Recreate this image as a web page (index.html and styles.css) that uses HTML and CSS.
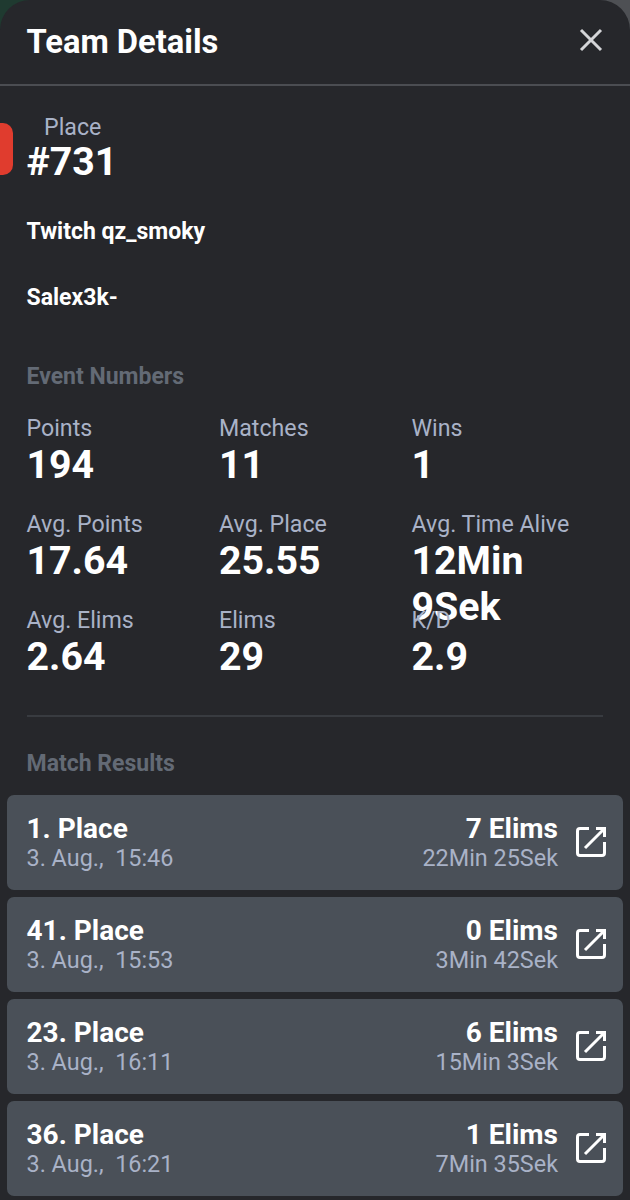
FILE: index.html
```html
<!DOCTYPE html>
<html lang="en">
<head>
    <meta charset="UTF-8">
    <meta name="viewport" content="width=device-width, initial-scale=1.0">
    <title>Team Details</title>
    <link rel="stylesheet" href="styles.css">
</head>
<body>

<div class="panel">
    <div class="header">
        <h1>Team Details</h1>
        <svg class="close" width="26" height="26" viewBox="0 0 26 26" aria-label="Close">
            <path d="M3 3 L23 23 M23 3 L3 23" fill="none" stroke="#d4d5d8" stroke-width="3"/>
        </svg>
    </div>

    <div class="place">
        <div class="place-marker"></div>
        <div class="place-label">Place</div>
        <div class="place-value">#731</div>
    </div>

    <div class="player">Twitch qz_smoky</div>
    <div class="player">Salex3k-</div>

    <h2 class="section-title numbers-title">Event Numbers</h2>
    <div class="stats">
        <div class="stat"><div class="stat-label">Points</div><div class="stat-value">194</div></div>
        <div class="stat"><div class="stat-label">Matches</div><div class="stat-value">11</div></div>
        <div class="stat"><div class="stat-label">Wins</div><div class="stat-value">1</div></div>
        <div class="stat"><div class="stat-label">Avg. Points</div><div class="stat-value">17.64</div></div>
        <div class="stat"><div class="stat-label">Avg. Place</div><div class="stat-value">25.55</div></div>
        <div class="stat"><div class="stat-label">Avg. Time Alive</div><div class="stat-value">12Min 9Sek</div></div>
        <div class="stat"><div class="stat-label">Avg. Elims</div><div class="stat-value">2.64</div></div>
        <div class="stat"><div class="stat-label">Elims</div><div class="stat-value">29</div></div>
        <div class="stat"><div class="stat-label">K/D</div><div class="stat-value">2.9</div></div>
    </div>

    <hr class="divider">

    <h2 class="section-title">Match Results</h2>
    <div class="matches">
        <div class="match">
            <div class="match-left"><div class="match-main">1. Place</div><div class="match-sub">3. Aug., &nbsp;15:46</div></div>
            <div class="match-right"><div class="match-main">7 Elims</div><div class="match-sub">22Min 25Sek</div></div>
            <svg class="open" width="32" height="32" viewBox="0 0 32 32"><path d="M14 2.5 H5 Q2.5 2.5 2.5 5 V27 Q2.5 29.5 5 29.5 H27 Q29.5 29.5 29.5 27 V16 M10 22 L29 3 M21 2.5 H29.5 V11" fill="none" stroke="#fff" stroke-width="3"/></svg>
        </div>
        <div class="match">
            <div class="match-left"><div class="match-main">41. Place</div><div class="match-sub">3. Aug., &nbsp;15:53</div></div>
            <div class="match-right"><div class="match-main">0 Elims</div><div class="match-sub">3Min 42Sek</div></div>
            <svg class="open" width="32" height="32" viewBox="0 0 32 32"><path d="M14 2.5 H5 Q2.5 2.5 2.5 5 V27 Q2.5 29.5 5 29.5 H27 Q29.5 29.5 29.5 27 V16 M10 22 L29 3 M21 2.5 H29.5 V11" fill="none" stroke="#fff" stroke-width="3"/></svg>
        </div>
        <div class="match">
            <div class="match-left"><div class="match-main">23. Place</div><div class="match-sub">3. Aug., &nbsp;16:11</div></div>
            <div class="match-right"><div class="match-main">6 Elims</div><div class="match-sub">15Min 3Sek</div></div>
            <svg class="open" width="32" height="32" viewBox="0 0 32 32"><path d="M14 2.5 H5 Q2.5 2.5 2.5 5 V27 Q2.5 29.5 5 29.5 H27 Q29.5 29.5 29.5 27 V16 M10 22 L29 3 M21 2.5 H29.5 V11" fill="none" stroke="#fff" stroke-width="3"/></svg>
        </div>
        <div class="match">
            <div class="match-left"><div class="match-main">36. Place</div><div class="match-sub">3. Aug., &nbsp;16:21</div></div>
            <div class="match-right"><div class="match-main">1 Elims</div><div class="match-sub">7Min 35Sek</div></div>
            <svg class="open" width="32" height="32" viewBox="0 0 32 32"><path d="M14 2.5 H5 Q2.5 2.5 2.5 5 V27 Q2.5 29.5 5 29.5 H27 Q29.5 29.5 29.5 27 V16 M10 22 L29 3 M21 2.5 H29.5 V11" fill="none" stroke="#fff" stroke-width="3"/></svg>
        </div>
    </div>
</div>

</body>
</html>
```

FILE: styles.css
```css
html, body {
    margin: 0;
    padding: 0;
    height: 1200px;
    overflow: hidden;
    background: linear-gradient(90deg, #1f3a30 0%, #1f3a30 50%, #4e5054 50%, #4e5054 100%);
}
body {
    font-family: 'Roboto', sans-serif;
    color: #fff;
}
.panel {
    height: 1200px;
    background-color: #26272b;
    border-radius: 30px 30px 0 0;
    overflow: hidden;
}
.header {
    height: 84px;
    padding: 0 27px;
    display: flex;
    justify-content: space-between;
    align-items: center;
    border-bottom: 2px solid #4b4d52;
}
.header h1 {
    margin: 0 0 0 -0.5px;
    font-size: 32.7px;
    font-weight: 700;
}
.close {
    margin: -4px -1px 0 0;
}
.place {
    position: relative;
    padding: 28px 27px 0;
    height: 65px;
}
.place-marker {
    position: absolute;
    left: -12px;
    top: 37px;
    width: 25px;
    height: 52px;
    background: #e03c2e;
    border-radius: 10px;
}
.place-label {
    margin-left: 17px;
    font-size: 23.2px;
    line-height: 26px;
    color: #a9b2c7;
}
.place-value {
    margin-left: -0.5px;
    font-size: 39.3px;
    font-weight: 700;
    line-height: 44px;
}
.player {
    margin-top: 40px;
    padding: 0 26.5px;
    font-size: 23px;
    font-weight: 700;
    line-height: 26px;
}
.section-title {
    margin: 0;
    padding: 0 26.5px;
    font-size: 23px;
    font-weight: 700;
    line-height: 26px;
    color: #636a75;
}
.numbers-title {
    margin-top: 53px;
}
.stats {
    display: grid;
    grid-template-columns: repeat(3, 192.5px);
    grid-auto-rows: 96.2px;
    padding: 0 26.5px;
    margin-top: 25px;
}
.stat-label {
    font-size: 23.2px;
    line-height: 27px;
    color: #a9b2c7;
    white-space: nowrap;
}
.stat-value {
    font-size: 39.3px;
    font-weight: 700;
    line-height: 46px;
    width: 170px;
}
.divider {
    margin: 11px 27px 34px;
    border: 0;
    border-top: 2px solid #383b40;
}
.matches {
    display: flex;
    flex-direction: column;
    gap: 7px;
    padding: 0 7px;
    margin-top: 18px;
}
.match {
    height: 95px;
    box-sizing: border-box;
    background: #4a5058;
    border-radius: 7px;
    padding: 0 16px 2px 19.5px;
    display: flex;
    align-items: center;
}
.match-left {
    flex: 1;
}
.match-right {
    text-align: right;
    margin-right: 17px;
}
.match-main {
    font-size: 28px;
    font-weight: 700;
    line-height: 33px;
}
.match-sub {
    font-size: 23.4px;
    line-height: 26px;
    color: #a9b2c7;
}
.open {
    margin-top: 2px;
}
```
